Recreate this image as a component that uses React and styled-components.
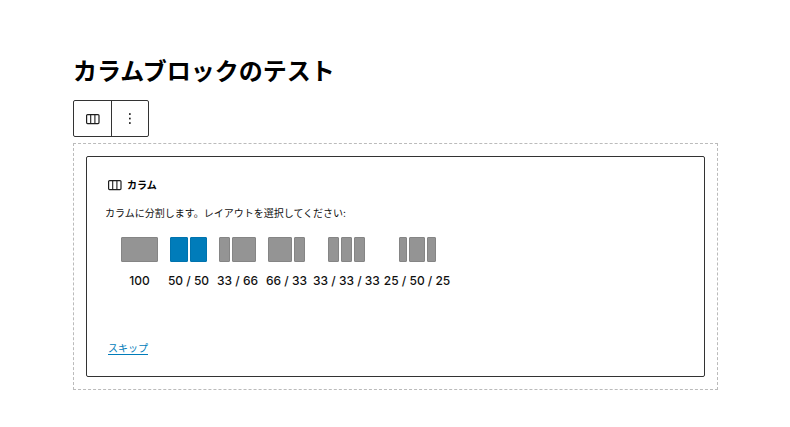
import { useState } from "react";
import styled, { createGlobalStyle } from "styled-components";

const GlobalStyle = createGlobalStyle`
  * {
    box-sizing: border-box;
  }
  body {
    margin: 0;
    background-color: #fff;
    color: #111;
    font-family: Inter, "Noto Sans CJK JP", sans-serif;
    font-size: 10px;
  }
  button {
    font-family: inherit;
    color: inherit;
    cursor: pointer;
  }
`;

const Editor = styled.main`
  padding: 54px 72px 36px 73px;
`;

const Title = styled.h1`
  margin: 0 0 10px;
  font-size: 24px;
  line-height: 36px;
  font-weight: 700;
  color: #000;
`;

const Toolbar = styled.div`
  display: inline-flex;
  border: 1px solid #333;
  border-radius: 2px;
  vertical-align: top;
`;

const ToolbarButton = styled.button`
  display: flex;
  align-items: center;
  justify-content: center;
  width: 37px;
  height: 35px;
  padding: 0;
  border: none;
  background-color: transparent;

  & + & {
    border-left: 1px solid #333;
  }
`;

const Block = styled.section`
  margin-top: 6px;
  padding: 12px;
  border: 1px dashed #bbb;
`;

const Placeholder = styled.div`
  padding: 18px;
  border: 1px solid #333;
  border-radius: 2px;
`;

const Label = styled.h2`
  display: flex;
  align-items: center;
  gap: 5px;
  margin: 0 0 8px;
  padding-left: 3px;
  font-size: 10px;
  line-height: 20px;
  font-weight: 700;
  color: #000;
`;

const Instructions = styled.p`
  margin: 0 0 14px;
  line-height: 20px;
`;

const Variations = styled.ul`
  display: flex;
  margin: 0;
  padding: 0 0 0 10px;
  list-style: none;
`;

const VariationButton = styled.button`
  display: flex;
  flex-direction: column;
  align-items: center;
  gap: 11px;
  min-width: 49px;
  padding: 0 2px;
  border: none;
  background-color: transparent;
  font-size: 12px;
  line-height: 16px;
  font-weight: 500;
  white-space: nowrap;
`;

const Preview = styled.span`
  display: grid;
  grid-template-columns: ${({ $columns }) => $columns};
  gap: 2px;
  width: 37px;
  height: 25px;
`;

const Column = styled.span`
  border: 1px solid ${({ $active }) => ($active ? "#0073ae" : "#858585")};
  border-radius: 1px;
  background-color: ${({ $active }) => ($active ? "#007cba" : "#949494")};
`;

const SkipLink = styled.a`
  display: inline-block;
  margin: 49px 0 0 3px;
  line-height: 20px;
  color: #007cba;
  text-decoration: underline;
  text-underline-offset: 2px;
`;

const ColumnsIcon = () => (
  <svg width="14" height="12" viewBox="0 0 14 12" fill="none" stroke="#1e1e1e" aria-hidden="true">
    <rect x="0.6" y="1.6" width="12.4" height="9" rx="1" strokeWidth="1.2" />
    <path d="M4.7 1.6v9M8.9 1.6v9" strokeWidth="1.1" />
  </svg>
);

const MoreIcon = () => (
  <svg width="4" height="14" viewBox="0 0 4 14" fill="#1e1e1e" aria-hidden="true">
    <rect x="1" y="1.2" width="1.7" height="1.7" />
    <rect x="1" y="5.7" width="1.7" height="1.7" />
    <rect x="1" y="10.2" width="1.7" height="1.7" />
  </svg>
);

const layouts = [
  { name: "100", columns: "1fr" },
  { name: "50 / 50", columns: "1fr 1fr" },
  { name: "33 / 66", columns: "11px 1fr" },
  { name: "66 / 33", columns: "1fr 11px" },
  { name: "33 / 33 / 33", columns: "1fr 1fr 1fr" },
  { name: "25 / 50 / 25", columns: "1fr 2fr 1fr" },
];

const App = () => {
  const [selected, setSelected] = useState("50 / 50");

  return (
    <>
      <GlobalStyle />
      <Editor lang="ja">
        <Title>カラムブロックのテスト</Title>
        <Toolbar role="toolbar">
          <ToolbarButton aria-label="カラム">
            <ColumnsIcon />
          </ToolbarButton>
          <ToolbarButton aria-label="オプション">
            <MoreIcon />
          </ToolbarButton>
        </Toolbar>
        <Block>
          <Placeholder>
            <Label>
              <ColumnsIcon />
              カラム
            </Label>
            <Instructions>
              カラムに分割します。レイアウトを選択してください:
            </Instructions>
            <Variations>
              {layouts.map(({ name, columns }) => (
                <li key={name}>
                  <VariationButton
                    aria-pressed={selected === name}
                    onClick={() => setSelected(name)}
                  >
                    <Preview $columns={columns}>
                      {columns.split(" ").map((_, i) => (
                        <Column key={i} $active={selected === name} />
                      ))}
                    </Preview>
                    {name}
                  </VariationButton>
                </li>
              ))}
            </Variations>
            <SkipLink href="#skip">スキップ</SkipLink>
          </Placeholder>
        </Block>
      </Editor>
    </>
  );
};

export default App;
